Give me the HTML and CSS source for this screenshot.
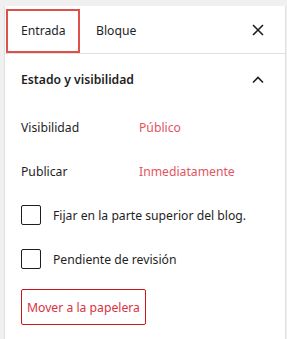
FILE: index.html
```html
<!DOCTYPE html>
<html lang="es">
<head>
  <meta charset="UTF-8">
  <meta name="viewport" content="width=device-width, initial-scale=1.0">
  <title>Ajustes</title>
  <link rel="stylesheet" href="styles.css">
</head>
<body>
  <aside class="sidebar">
    <div class="tabs">
      <button class="tab tab-active">Entrada</button>
      <button class="tab">Bloque</button>
      <button class="close" aria-label="Cerrar">
        <svg width="24" height="24" viewBox="0 0 24 24"><path d="M7 7l10 10M17 7L7 17" stroke="#1e1e1e" stroke-width="1.6" fill="none"/></svg>
      </button>
    </div>
    <section class="panel">
      <div class="panel-header">
        <span>Estado y visibilidad</span>
        <svg width="24" height="24" viewBox="0 0 24 24"><path d="M7 14.5l5-5 5 5" stroke="#1e1e1e" stroke-width="1.6" fill="none"/></svg>
      </div>
      <div class="row">
        <span class="label">Visibilidad</span>
        <a class="value" href="#">Público</a>
      </div>
      <div class="row">
        <span class="label">Publicar</span>
        <a class="value" href="#">Inmediatamente</a>
      </div>
      <label class="row check">
        <span class="box"></span>
        <span>Fijar en la parte superior del blog.</span>
      </label>
      <label class="row check">
        <span class="box"></span>
        <span>Pendiente de revisión</span>
      </label>
      <button class="trash">Mover a la papelera</button>
    </section>
  </aside>
</body>
</html>
```

FILE: styles.css
```css
body {
  margin: 0;
  background: #f0f0f0;
  font-family: "Noto Sans", "Open Sans", sans-serif;
  font-size: 12.2px;
  color: #1e1e1e;
}
.sidebar {
  margin: 6px 1px 0 4px;
  height: 333px;
  background: #fff;
  border-left: 1px solid #e0e0e0;
  border-right: 1px solid #e0e0e0;
}
.tabs {
  display: flex;
  align-items: center;
  height: 47px;
  border-bottom: 1px solid #e0e0e0;
}
.tab {
  font: inherit;
  color: #1e1e1e;
  background: none;
  border: 2px solid transparent;
  height: 44px;
  padding: 0 13px;
  margin-left: 1px;
  margin-top: 2px;
  cursor: pointer;
}
.tab-active {
  width: 74px;
  border-color: #e0504a;
}
.close {
  margin-left: auto;
  margin-right: 15px;
  background: none;
  border: none;
  padding: 0;
  width: 24px;
  height: 24px;
}
.panel {
  padding: 0 16px;
}
.panel-header {
  display: flex;
  align-items: center;
  justify-content: space-between;
  height: 51px;
  font-weight: 600;
  margin-right: -1px;
}
.row {
  display: flex;
  align-items: center;
  height: 44px;
}
.label {
  width: 118px;
}
.value {
  color: #e2545f;
  text-decoration: none;
}
.check {
  gap: 12px;
}
.box {
  width: 18px;
  height: 18px;
  border: 1px solid #1e1e1e;
  border-radius: 2px;
}
.trash {
  margin-top: 8px;
  height: 36px;
  padding: 0 5px;
  font: inherit;
  color: #d6333f;
  background: #fff;
  border: 1px solid #cc1818;
  border-radius: 2px;
}
```
